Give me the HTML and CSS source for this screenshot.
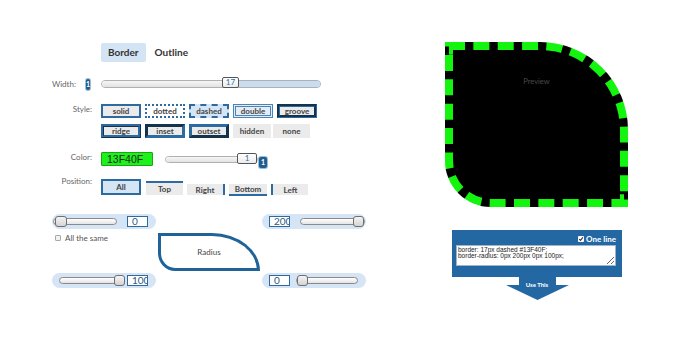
FILE: index.html
```html
<!DOCTYPE html>
<html lang="en">
<head>
<meta charset="utf-8">
<title>Border generator</title>
<link rel="stylesheet" href="styles.css">
</head>
<body>
<div class="page">
  <section class="editor">
    <div class="tabs">
      <span class="tab active">Border</span>
      <span class="tab">Outline</span>
    </div>

    <div class="row row-width">
      <div class="label label-width">Width:<span class="badge">1</span></div>
      <div class="slider slider-width">
        <span class="seg seg-done" style="width:120px"></span>
        <span class="knob">17</span>
        <span class="seg seg-rest"></span>
      </div>
    </div>

    <div class="row row-style">
      <div class="label">Style:</div>
      <div class="style-grid">
        <div class="btn-row">
          <span class="btn s-solid">solid</span>
          <span class="btn s-dotted">dotted</span>
          <span class="btn s-dashed">dashed</span>
          <span class="btn s-double">double</span>
          <span class="btn s-groove">groove</span>
        </div>
        <div class="btn-row">
          <span class="btn s-ridge">ridge</span>
          <span class="btn s-inset">inset</span>
          <span class="btn s-outset">outset</span>
          <span class="btn s-hidden">hidden</span>
          <span class="btn s-none">none</span>
        </div>
      </div>
    </div>

    <div class="row row-color">
      <div class="label">Color:</div>
      <div class="swatch">13F40F</div>
      <div class="slider slider-color">
        <span class="seg seg-done seg-full"></span>
        <span class="knob knob-color">1</span>
      </div>
      <span class="badge badge-color">1</span>
    </div>

    <div class="row row-pos">
      <div class="label label-pos">Position:</div>
      <div class="pos-list">
        <span class="pos pos-all">All</span>
        <span class="pos pos-top">Top</span>
        <span class="pos pos-right">Right</span>
        <span class="pos pos-bottom">Bottom</span>
        <span class="pos pos-left">Left</span>
      </div>
    </div>

    <div class="radius">
      <div class="pill pill-tl">
        <div class="mini mini-tl"><span class="mini-knob"></span></div>
        <span class="num">0</span>
      </div>
      <div class="pill pill-tr">
        <span class="num">200</span>
        <div class="mini mini-tr mini-end"><span class="mini-knob"></span></div>
      </div>
      <div class="same"><span class="checkbox"></span>All the same</div>
      <div class="radius-shape">Radius</div>
      <div class="pill pill-bl">
        <div class="mini mini-bl mini-end"><span class="mini-knob"></span></div>
        <span class="num">100</span>
      </div>
      <div class="pill pill-br">
        <span class="num">0</span>
        <div class="mini mini-br"><span class="mini-knob"></span></div>
      </div>
    </div>
  </section>

  <section class="output">
    <div class="preview">Preview</div>
    <div class="code-panel">
      <div class="oneline"><span class="check"><svg viewBox="0 0 6 6" width="6" height="6"><path d="M1.2 3.1 L2.5 4.4 L4.9 1.4" fill="none" stroke="#333" stroke-width="1.1"/></svg></span>One line</div>
      <textarea class="code" spellcheck="false">border: 17px dashed #13F40F;
border-radius: 0px 200px 0px 100px;</textarea>
    </div>
    <div class="use">
      <svg class="use-arrow" viewBox="0 0 63 23" width="63" height="23"><polygon points="13,0 50,0 50,8 63,8 31.5,23 0,8 13,8" fill="#2468a3"/></svg>
      <span class="use-label">Use This</span>
    </div>
  </section>
</div>
</body>
</html>
```
FILE: styles.css
```css
* { box-sizing: border-box; }
body {
  margin: 0;
  background: #fff;
  color: #333;
  font-family: Lato, "Open Sans", "Liberation Sans", sans-serif;
}
.page {
  display: flex;
  align-items: flex-start;
  padding-top: 42px;
}

/* ---------- editor column ---------- */
.editor {
  margin-left: 52px;
  width: 316px;
  flex: none;
}
.tabs {
  display: flex;
  margin: 1px 0 0 49px;
  height: 19px;
}
.tab {
  font-size: 10px;
  font-weight: 700;
  line-height: 19px;
  padding: 0 7px;
  color: #333;
  border-radius: 2px;
}
.tab + .tab { margin-left: 2px; }
.tab.active { background: #d3e4f4; }

.row {
  display: flex;
  align-items: flex-start;
}
.label {
  width: 40px;
  margin-right: 9px;
  flex: none;
  text-align: right;
  font-size: 8px;
  line-height: 10px;
  color: #666;
  white-space: nowrap;
}
.badge {
  display: inline-flex;
  align-items: center;
  justify-content: center;
  width: 8px;
  height: 11px;
  border-radius: 2px;
  background: #1f5d8f;
  color: #fff;
  font-size: 7px;
  font-weight: 700;
  box-shadow: 0 0 0 1px #9dbcd8;
}

/* width */
.row-width {
  margin-top: 16px;
  height: 12px;
  align-items: center;
}
.label-width {
  display: flex;
  align-items: center;
  justify-content: flex-end;
}
.label-width .badge { margin-left: 10px; margin-right: 2px; }

.slider {
  display: flex;
  align-items: center;
  height: 8px;
  border: 1px solid #b0b0b0;
  border-radius: 4px;
}
.slider-width { width: 220px; }
.seg { height: 100%; }
.seg-done {
  background: linear-gradient(#f6f6f6, #e2e2e2);
  border-radius: 4px 0 0 4px;
}
.seg-rest {
  flex: 1;
  background: #c9ddf1;
  border-radius: 0 4px 4px 0;
}
.seg-full { flex: 1; }
.knob {
  flex: none;
  width: 17px;
  height: 11px;
  margin-top: -3px;
  border: 1px solid #555;
  border-radius: 2px;
  background: linear-gradient(#fff, #ececec);
  color: #2a6ea6;
  font-size: 8px;
  line-height: 9px;
  text-align: center;
}

/* style */
.row-style { margin-top: 14px; }
.btn-row { display: flex; gap: 4px; }
.btn-row + .btn-row { margin-top: 6px; }
.btn {
  width: 40px;
  height: 14px;
  display: flex;
  align-items: center;
  justify-content: center;
  border: 2px solid #2c6aa0;
  background: #ebebeb;
  color: #444;
  font-size: 8px;
  font-weight: 700;
  line-height: 1;
}
.s-dotted { border-style: dotted; background: #fff; }
.s-dashed { border-style: dashed; background: #d4e5f5; }
.s-double { border: 3px double #4a83b6; background: #e4edf6; }
.s-groove { border: 3px groove #2c6aa0; }
.s-ridge { border: 3px ridge #2c6aa0; }
.s-inset { border: 3px inset #2c6aa0; }
.s-outset { border: 3px outset #2c6aa0; }
.s-hidden { border: 0; width: 38px; }
.s-none { border: 0; width: 37px; margin-left: -2px; }

/* color */
.row-color { margin-top: 14px; align-items: center; height: 14px; }
.row-color .label { align-self: flex-start; }
.swatch {
  width: 52px;
  height: 14px;
  padding-left: 5px;
  background: #1df01a;
  border: 1px solid #18a516;
  border-radius: 1px;
  font-family: "Liberation Sans", Arial, sans-serif;
  font-size: 10.5px;
  line-height: 12px;
  color: #222;
}
.slider-color {
  width: 93px;
  margin-left: 12px;
  height: 7px;
}
.knob-color { width: 20px; margin-top: -2px; }
.badge-color { margin-left: 1px; margin-top: 6px; }

/* position */
.row-pos { margin-top: 13px; }
.label-pos { margin-top: -3px; }
.pos-list {
  display: flex;
  align-items: flex-end;
  height: 16px;
}
.pos {
  display: flex;
  align-items: center;
  justify-content: center;
  height: 11px;
  width: 38px;
  background: #ebebeb;
  color: #444;
  font-size: 8px;
  font-weight: 700;
  line-height: 1;
  margin-left: 4px;
}
.pos-all {
  width: 40px;
  height: 16px;
  margin-left: 0;
  border: 2px solid #2c6aa0;
  background: #d4e5f5;
}
.pos-top { width: 37px; height: 14px; border-top: 2px solid #2c6aa0; margin-left: 5px; }
.pos-right { border-right: 2px solid #2c6aa0; }
.pos-bottom { height: 12px; border-bottom: 2px solid #2c6aa0; margin-bottom: -1px; }
.pos-left { width: 37px; border-left: 2px solid #2c6aa0; }

/* radius */
.radius {
  margin-top: 19px;
  display: grid;
  grid-template-columns: 105px 105px 105px;
  grid-template-rows: 15px 44px 15px;
}
.pill {
  width: 104px;
  height: 15px;
  display: flex;
  align-items: center;
  border-radius: 8px;
  background: #d5e5f5;
}
.pill-tl { grid-column: 1; grid-row: 1; padding-left: 1px; }
.pill-tr { grid-column: 3; grid-row: 1; padding-left: 7px; }
.pill-bl { grid-column: 1; grid-row: 3; padding-left: 7px; }
.pill-br { grid-column: 3; grid-row: 3; padding-left: 7px; }

.mini {
  display: flex;
  align-items: center;
  height: 7px;
  border: 1px solid #8a8a8a;
  border-radius: 4px;
  background: linear-gradient(#fff, #e4e4e4);
}
.mini-end { justify-content: flex-end; }
.mini-knob {
  flex: none;
  width: 12px;
  height: 11px;
  border: 1px solid #6f6f6f;
  border-radius: 3px;
  background: linear-gradient(#f4f4f4, #d4d4d4);
}
.mini-tl { width: 64px; margin-right: 10px; }
.mini-tl .mini-knob { margin-left: 1px; }
.mini-tr { width: 65px; margin-left: 10px; }
.mini-tr .mini-knob { width: 11px; }
.mini-bl { width: 64px; margin-right: 4px; }
.mini-bl .mini-knob { width: 11px; margin-right: -3px; }
.mini-br { width: 62px; margin-left: 6px; }
.mini-br .mini-knob { width: 11px; }

.num {
  flex: none;
  width: 21px;
  height: 11px;
  padding-left: 4px;
  border: 1px solid #2c6aa0;
  background: #fff;
  color: #2d5a85;
  font-size: 10px;
  line-height: 9px;
  overflow: hidden;
  white-space: nowrap;
}

.same {
  grid-column: 1;
  grid-row: 2;
  display: flex;
  align-items: center;
  height: 10px;
  margin: 4px 0 0 3px;
  font-size: 8px;
  color: #555;
}
.checkbox {
  width: 6px;
  height: 6px;
  margin-right: 4px;
  border: 1px solid #a9a9a9;
  background: #f2f2f2;
  border-radius: 1px;
}
.radius-shape {
  grid-column: 2;
  grid-row: 2;
  margin: 4px 2px 0 1px;
  height: 38px;
  border: 3px solid #1f6399;
  border-radius: 0 48px 0 17px / 0 38px 0 18px;
  display: flex;
  align-items: center;
  justify-content: center;
  font-size: 8px;
  color: #444;
}

/* ---------- output column ---------- */
.output {
  margin-left: 77px;
  width: 183px;
  flex: none;
}
.preview {
  width: 183px;
  height: 165px;
  border: 8px dashed #13F40F;
  border-radius: 0 88px 0 46px;
  background: #000;
  color: #4a4a4a;
  font-size: 7.5px;
  text-align: center;
  padding-top: 27px;
  line-height: 10px;
}
.code-panel {
  margin: 23px 6px 0 7px;
  width: 170px;
  padding: 4px 6px 11px 4px;
  background: #2468a3;
}
.oneline {
  display: flex;
  align-items: center;
  justify-content: flex-end;
  height: 9px;
  margin-bottom: 2px;
  color: #fff;
  font-size: 8px;
  font-weight: 700;
}
.check {
  display: flex;
  width: 6px;
  height: 6px;
  margin-right: 2px;
  background: #fff;
  border-radius: 1px;
}
.code {
  display: block;
  width: 160px;
  height: 21px;
  margin: 0;
  padding: 1px 1px;
  border: 1px solid #a0b4c8;
  background: #fff;
  color: #222;
  font-family: "Liberation Sans", Arial, sans-serif;
  font-size: 6.5px;
  line-height: 6px;
  overflow: hidden;
}
.use {
  position: relative;
  width: 63px;
  height: 23px;
  margin: 0 auto;
  left: 0.5px;
}
.use-arrow { display: block; }
.use-label {
  position: absolute;
  left: 0;
  right: 0;
  top: 4px;
  text-align: center;
  color: #fff;
  font-size: 6px;
  font-weight: 700;
  line-height: 8px;
}
```
